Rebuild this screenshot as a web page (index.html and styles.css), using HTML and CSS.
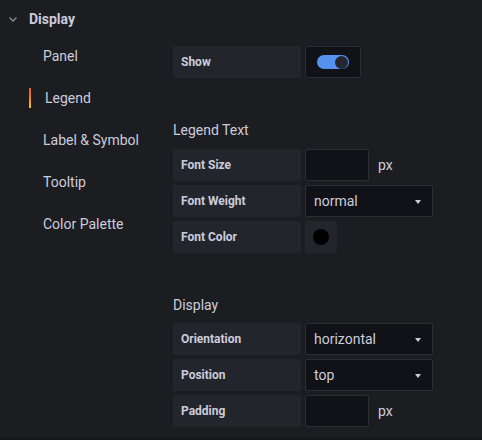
FILE: index.html
```html
<!DOCTYPE html>
<html>
<head>
<meta charset="utf-8">
<link rel="stylesheet" href="styles.css">
</head>
<body>
<div class="page">
  <div class="section-head">
    <svg class="chev" width="10" height="20" viewBox="0 0 10 20"><polyline points="1.5,8.5 5,12 8.5,8.5" fill="none" stroke="#8e8e9a" stroke-width="1.3"/></svg>
    <span>Display</span>
  </div>
  <div class="body">
    <nav class="nav">
      <div class="nav-item">Panel</div>
      <div class="nav-item active">Legend</div>
      <div class="nav-item">Label &amp; Symbol</div>
      <div class="nav-item">Tooltip</div>
      <div class="nav-item">Color Palette</div>
    </nav>
    <div class="content">
      <div class="group">
        <div class="row">
          <div class="label">Show</div>
          <div class="switch-box"><div class="track"><div class="knob"></div></div></div>
        </div>
      </div>
      <div class="group">
        <div class="heading">Legend Text</div>
        <div class="row">
          <div class="label">Font Size</div>
          <div class="input"></div>
          <span class="unit">px</span>
        </div>
        <div class="row">
          <div class="label">Font Weight</div>
          <div class="select"><span>normal</span><i class="caret"></i></div>
        </div>
        <div class="row">
          <div class="label">Font Color</div>
          <div class="swatch-box"><div class="swatch"></div></div>
        </div>
      </div>
      <div class="group">
        <div class="heading heading-tight">Display</div>
        <div class="row">
          <div class="label">Orientation</div>
          <div class="select"><span>horizontal</span><i class="caret"></i></div>
        </div>
        <div class="row">
          <div class="label">Position</div>
          <div class="select"><span>top</span><i class="caret"></i></div>
        </div>
        <div class="row">
          <div class="label">Padding</div>
          <div class="input"></div>
          <span class="unit">px</span>
        </div>
      </div>
    </div>
  </div>
</div>
</body>
</html>
```
FILE: styles.css
```css
html {
  background: #161719;
}
body {
  margin: 0;
  font-family: Roboto, "Liberation Sans", sans-serif;
  color: #ccccdc;
  font-size: 14px;
  line-height: 20px;
}
.page {
  height: 437px;
  background: #1b1d21;
  box-sizing: border-box;
  padding-top: 9px;
  overflow: hidden;
}
.section-head {
  display: flex;
  align-items: center;
  padding-left: 8px;
  font-weight: 700;
  height: 20px;
}
.chev {
  margin-right: 11px;
}
.body {
  display: flex;
  padding-left: 29px;
  margin-top: 17px;
}
.nav {
  width: 144px;
  flex: none;
}
.nav-item {
  padding-left: 14px;
  line-height: 20px;
  margin-bottom: 22px;
  white-space: nowrap;
}
.nav-item.active {
  border-left: 2px solid #f05a28;
  border-image: linear-gradient(#f05a28 20%, #fbca0a 100%) 1;
}
.content {
  flex: 1;
}
.group {
  margin-bottom: 42px;
}
.heading {
  line-height: 20px;
  margin-bottom: 9px;
}
.heading-tight {
  margin-bottom: 8px;
}
.row {
  display: flex;
  align-items: center;
  height: 32px;
  margin-bottom: 4px;
}
.label {
  width: 128px;
  height: 32px;
  box-sizing: border-box;
  background: #22252b;
  border-radius: 2px;
  padding-left: 8px;
  display: flex;
  align-items: center;
  font-size: 12px;
  font-weight: 700;
  margin-right: 4px;
  flex: none;
}
.switch-box {
  width: 56px;
  height: 32px;
  box-sizing: border-box;
  background: #111217;
  border: 1px solid #2a2c32;
  border-radius: 2px;
  display: flex;
  align-items: center;
  justify-content: center;
}
.track {
  width: 32px;
  height: 14px;
  border-radius: 7px;
  background: #5592f0;
  position: relative;
}
.knob {
  position: absolute;
  right: 1px;
  top: 0.5px;
  width: 13px;
  height: 13px;
  border-radius: 50%;
  background: #24272d;
}
.input {
  width: 64px;
  height: 32px;
  box-sizing: border-box;
  background: #111217;
  border: 1px solid #2c2e34;
  border-radius: 2px;
}
.unit {
  margin-left: 9px;
  font-size: 14px;
}
.select {
  width: 128px;
  height: 32px;
  box-sizing: border-box;
  background: #111217;
  border: 1px solid #2c2e34;
  border-radius: 2px;
  display: flex;
  align-items: center;
  justify-content: space-between;
  padding: 0 11px 0 8px;
}
.caret {
  width: 0;
  height: 0;
  border-left: 3.5px solid transparent;
  border-right: 3.5px solid transparent;
  border-top: 4px solid #ccccdc;
  margin-top: 2px;
}
.swatch-box {
  width: 32px;
  height: 32px;
  background: #22252b;
  border-radius: 2px;
  display: flex;
  align-items: center;
  justify-content: center;
}
.swatch {
  width: 16px;
  height: 16px;
  border-radius: 50%;
  background: #000;
}
```
